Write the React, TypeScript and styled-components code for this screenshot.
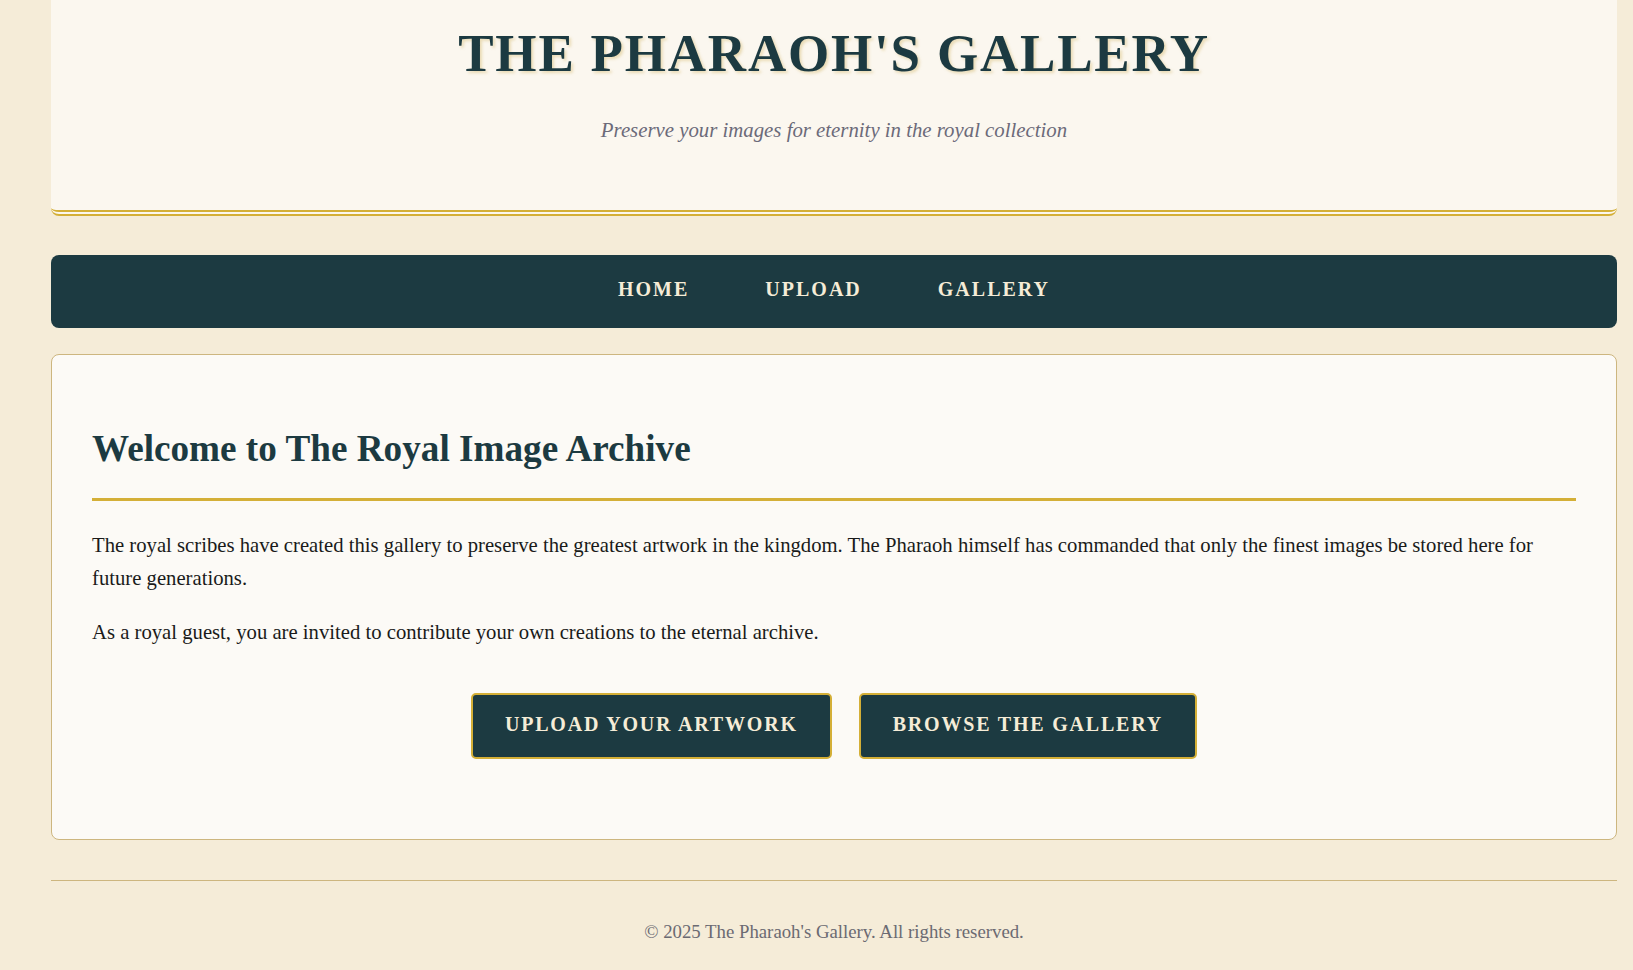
import React from "react";
import styled, { createGlobalStyle } from "styled-components";

const GlobalStyle = createGlobalStyle`
  html, body {
    margin: 0;
    padding: 0;
    background: #f5ecd8;
  }
  body {
    font-family: "Liberation Serif", "Times New Roman", serif;
    color: #1a1a1a;
  }
  * { box-sizing: border-box; }
`;

const Page = styled.div`
  width: 1566px;
  margin-left: 51px;
  display: flex;
  flex-direction: column;
`;

const Header = styled.header`
  background: #fbf7ef;
  border-bottom: 6px double #d4af37;
  border-radius: 0 0 8px 8px;
  padding: 23px 0 68px;
  text-align: center;
`;

const Title = styled.h1`
  margin: 0 0 34px;
  font-size: 53px;
  line-height: 61px;
  font-weight: 700;
  letter-spacing: 1.8px;
  color: #1c3a41;
  text-shadow: 2px 2px 3px rgba(200, 165, 70, 0.35);
`;

const Subtitle = styled.p`
  margin: 0;
  font-size: 20.8px;
  line-height: 24px;
  font-style: italic;
  color: #6b6a79;
`;

const Nav = styled.nav`
  margin-top: 39px;
  height: 73px;
  background: #1c3a41;
  border-radius: 8px;
  display: flex;
  justify-content: center;
  align-items: center;
  gap: 40px;
`;

const NavLink = styled.a`
  padding: 6px 18px 10px;
  font-size: 20px;
  font-weight: 700;
  letter-spacing: 2px;
  text-transform: uppercase;
  color: #f5ecd7;
  text-decoration: none;
  cursor: pointer;
`;

const Card = styled.main`
  margin-top: 26px;
  background: #fcfaf6;
  border: 1px solid #cdb67f;
  border-radius: 8px;
  padding: 40px;
  display: flex;
  flex-direction: column;
`;

const Heading = styled.h2`
  margin: 33px 0 28px;
  padding-bottom: 28px;
  border-bottom: 3px solid #d4af37;
  font-size: 37.2px;
  font-weight: 700;
  line-height: 42px;
  color: #1c3a41;
`;

const Paragraph = styled.p<{ $last?: boolean }>`
  margin: 0 0 ${(p) => (p.$last ? "0" : "1em")};
  font-size: 20.7px;
  line-height: 1.6;
  color: #1a1a1a;
`;

const ButtonRow = styled.div`
  margin: 44px 0 40px;
  display: flex;
  justify-content: center;
  gap: 27px;
`;

const Button = styled.a`
  display: inline-flex;
  align-items: center;
  justify-content: center;
  height: 66px;
  padding: 0 32px 4px;
  background: #1c3a41;
  border: 2px solid #d4af37;
  border-radius: 5px;
  font-size: 20px;
  font-weight: 700;
  letter-spacing: 1.8px;
  text-transform: uppercase;
  color: #f5ecd7;
  text-decoration: none;
  cursor: pointer;
`;

const Footer = styled.footer`
  margin-top: 40px;
  border-top: 1px solid #cdb67f;
  padding: 40px 0 28px;
  text-align: center;
  font-size: 18.8px;
  color: #6b6a72;
`;

export default function App() {
  return (
    <>
      <GlobalStyle />
      <Page>
        <Header>
          <Title>THE PHARAOH'S GALLERY</Title>
          <Subtitle>Preserve your images for eternity in the royal collection</Subtitle>
        </Header>
        <Nav>
          <NavLink>Home</NavLink>
          <NavLink>Upload</NavLink>
          <NavLink>Gallery</NavLink>
        </Nav>
        <Card>
          <Heading>Welcome to The Royal Image Archive</Heading>
          <Paragraph>
            The royal scribes have created this gallery to preserve the greatest artwork in the
            kingdom. The Pharaoh himself has commanded that only the finest images be stored here
            for future generations.
          </Paragraph>
          <Paragraph $last>
            As a royal guest, you are invited to contribute your own creations to the eternal
            archive.
          </Paragraph>
          <ButtonRow>
            <Button>Upload Your Artwork</Button>
            <Button>Browse the Gallery</Button>
          </ButtonRow>
        </Card>
        <Footer>© 2025 The Pharaoh's Gallery. All rights reserved.</Footer>
      </Page>
    </>
  );
}
